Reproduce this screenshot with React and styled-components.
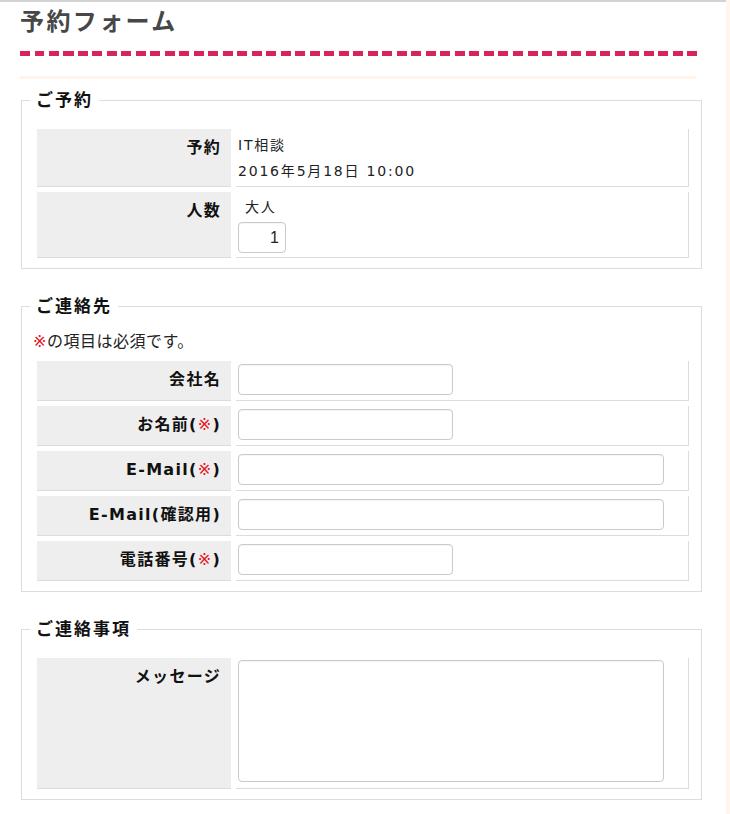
import React from "react";
import styled, { createGlobalStyle } from "styled-components";

const GlobalStyle = createGlobalStyle`
  html, body {
    margin: 0;
    padding: 0;
    background: #fff6f0;
  }
  body {
    font-family: "DejaVu Sans", "Noto Sans CJK JP", sans-serif;
    color: #222;
  }
  * { box-sizing: border-box; }
`;

const Page = styled.div`
  width: 726px;
  min-height: 100vh;
  background: #fff;
  border-top: 2px solid #d2d2d2;
  padding: 0 0 20px 20px;
`;

const Title = styled.h1`
  margin: 0;
  font-family: "Noto Sans CJK JP", sans-serif;
  font-size: 24px;
  font-weight: 700;
  line-height: 36px;
  letter-spacing: 2.4px;
  color: #474747;
`;

const DashedRule = styled.div`
  width: 677px;
  height: 5px;
  margin-top: 13px;
  background: repeating-linear-gradient(
    to right,
    #d8245a 0 10px,
    transparent 10px 14.5px
  );
`;

const SoftRule = styled.div`
  width: 676px;
  height: 3px;
  margin-top: 20px;
  background: #fff3ea;
`;

const Fieldset = styled.fieldset`
  width: 681px;
  margin: ${(p) => (p.$first ? "9px" : "25px")} 0 0 1px;
  padding: 0 12px 10px 15px;
  border: 1px solid #dcdcdc;
`;

const Legend = styled.legend`
  margin-left: -7px;
  padding: 0 6px;
  font-family: "DejaVu Sans", "Noto Sans CJK JP", sans-serif;
  font-size: 17px;
  font-weight: 700;
  line-height: 24px;
  letter-spacing: 2px;
  color: #111;
`;

const Body = styled.div`
  padding-top: 12px;
`;

const Note = styled.p`
  margin: 0 0 2px -4px;
  font-size: 16px;
  line-height: 24px;
  letter-spacing: 0.5px;
  color: #222;
`;

const Req = styled.span`
  color: #e8131b;
  font-weight: 400;
`;

const Rows = styled.div`
  display: flex;
  flex-direction: column;
  gap: 5px;
  padding-top: 5px;
`;

const Row = styled.div`
  display: grid;
  grid-template-columns: 194px 453px;
  column-gap: 5px;
`;

const Label = styled.div`
  background: #eeeeee;
  border-bottom: 1px solid #dcdcdc;
  text-align: right;
  padding: 7px 10px 0 0;
  font-size: 16px;
  font-weight: 700;
  line-height: 24px;
  letter-spacing: 1.3px;
  color: #111;
`;

const Value = styled.div`
  border-bottom: 1px solid #dcdcdc;
  border-right: 1px solid #dcdcdc;
  padding: ${(p) => p.$pad || "3px 2px 5px"};
  font-size: 14px;
  letter-spacing: 1.8px;
  color: #222;
`;

const Line = styled.div`
  line-height: 26px;
`;

const SubLabel = styled.div`
  line-height: 24px;
  padding-left: 7px;
`;

const TextInput = styled.input`
  display: block;
  width: ${(p) => (p.$wide ? "426px" : "215px")};
  height: 31px;
  padding: 0 6px;
  border: 1px solid #cacaca;
  border-radius: 4px;
  box-shadow: inset 0 1px 1px rgba(0, 0, 0, 0.04);
  font-family: "DejaVu Sans", sans-serif;
  font-size: 14px;
  background: #fff;
  outline: none;
`;

const NumberInput = styled(TextInput)`
  width: 48px;
  margin-top: 3px;
  text-align: right;
  font-family: "Liberation Sans", sans-serif;
  font-size: 16px;
  color: #222;
`;

const TextArea = styled.textarea`
  display: block;
  width: 426px;
  height: 122px;
  border: 1px solid #cacaca;
  border-radius: 4px;
  box-shadow: inset 0 1px 1px rgba(0, 0, 0, 0.04);
  resize: none;
  outline: none;
  font-family: "DejaVu Sans", sans-serif;
`;

const contactFields = [
  { label: "会社名", req: false, wide: false },
  { label: "お名前", req: true, wide: false },
  { label: "E-Mail", req: true, wide: true },
  { label: "E-Mail(確認用)", req: false, wide: true },
  { label: "電話番号", req: true, wide: false },
];

export default function App() {
  return (
    <>
      <GlobalStyle />
      <Page>
        <Title>予約フォーム</Title>
        <DashedRule />
        <SoftRule />

        <Fieldset $first>
          <Legend>ご予約</Legend>
          <Body>
            <Rows>
              <Row>
                <Label>予約</Label>
                <Value $pad="3px 2px 2px">
                  <Line>IT相談</Line>
                  <Line>2016年5月18日 10:00</Line>
                </Value>
              </Row>
              <Row>
                <Label>人数</Label>
                <Value $pad="3px 2px 4px">
                  <SubLabel>大人</SubLabel>
                  <NumberInput defaultValue="1" />
                </Value>
              </Row>
            </Rows>
          </Body>
        </Fieldset>

        <Fieldset>
          <Legend>ご連絡先</Legend>
          <Body>
            <Note>
              <Req>※</Req>の項目は必須です。
            </Note>
            <Rows>
              {contactFields.map((f) => (
                <Row key={f.label}>
                  <Label>
                    {f.req ? (
                      <>
                        {f.label}(<Req>※</Req>)
                      </>
                    ) : (
                      f.label
                    )}
                  </Label>
                  <Value>
                    <TextInput $wide={f.wide} />
                  </Value>
                </Row>
              ))}
            </Rows>
          </Body>
        </Fieldset>

        <Fieldset>
          <Legend>ご連絡事項</Legend>
          <Body>
            <Rows>
              <Row>
                <Label>メッセージ</Label>
                <Value $pad="2px 2px 6px">
                  <TextArea />
                </Value>
              </Row>
            </Rows>
          </Body>
        </Fieldset>
      </Page>
    </>
  );
}
